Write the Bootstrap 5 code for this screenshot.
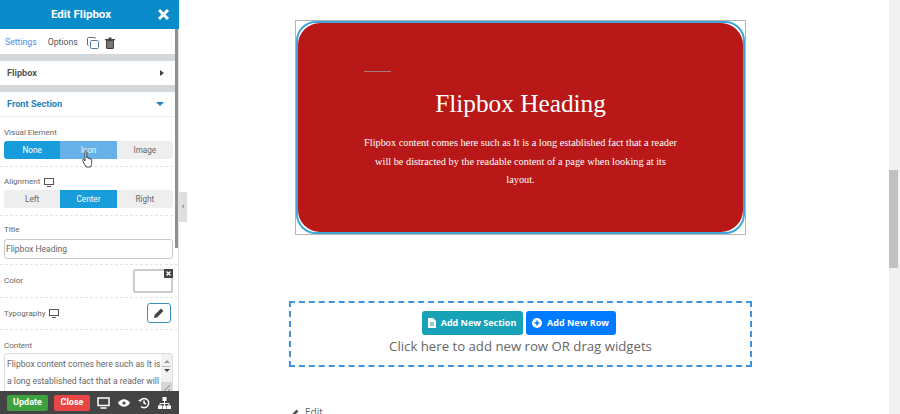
<!DOCTYPE html>
<html lang="en">

<head>
    <meta charset="UTF-8">
    <meta name="viewport" content="width=device-width, initial-scale=1.0">
    <title>Edit Flipbox</title>
    <link href="https://cdn.jsdelivr.net/npm/bootstrap@5.3.3/dist/css/bootstrap.min.css" rel="stylesheet">
    <style>
        html, body { height: 414px; overflow: hidden; }
        body { font-family: Roboto, "Liberation Sans", sans-serif; background: #fff; color: #555; }

        .page-wrap { height: 414px; }

        /* editor panel */
        .edit-panel { width: 179px; flex: none; height: 414px; background: #fff; }
        .panel-head { height: 29px; flex: none; background: #0a8cca; color: #fff; font-size: 11.5px; font-weight: 700; padding-right: 17px; }
        .panel-head svg { position: absolute; right: 9px; top: 8px; }
        .panel-body { flex: 1 1 auto; min-height: 0; overflow: hidden; position: relative; border-right: 1px solid #e4e4e4; }
        .panel-scroll { position: absolute; right: 0; top: 0; width: 3px; height: 219px; background: #8f8f8f; }
        .panel-tabs { height: 25px; font-size: 8.7px; padding: 2px 0 0 5px; color: #555; }
        .panel-tabs .tab-on { color: #4d8fe8; margin-right: 11px; }
        .panel-tabs .tab-off { margin-right: 9px; }
        .tab-icons { gap: 6px; }
        .grey-band { height: 7px; background: #d5d8da; margin-right: 3px; }
        .acc-row { height: 24px; font-size: 9.2px; font-weight: 700; padding: 0 11px 0 7px; margin-right: 3px; color: #555; }
        .acc-row.is-open { color: #1e84bd; border-bottom: 1px solid #eee; height: 25px; }
        .tri-right { width: 0; height: 0; border-left: 4px solid #444; border-top: 3px solid transparent; border-bottom: 3px solid transparent; }
        .tri-down { width: 0; height: 0; border-top: 4px solid #1e84bd; border-left: 4px solid transparent; border-right: 4px solid transparent; }

        .field-block { padding: 0 5px 0 4px; border-bottom: 1px dashed #e6e6e6; font-size: 8px; color: #666; }
        .field-label { font-size: 8px; line-height: 10px; color: #666; }
        .seg-group { height: 18px; background: #eee; border-radius: 3px; overflow: hidden; font-size: 8.2px; color: #666; }
        .seg-group > div { flex: 1 1 0; }
        .seg-on { background: #189cdc; color: #fff; }
        .seg-hover { color: #e8f2fa; background: #66b2e8; }
        .hand-cursor { position: absolute; left: 82px; top: 122px; }
        .field-input { height: 20px; border: 1px solid #c9c9c9; border-radius: 3px; font-size: 8.5px; color: #666; padding-left: 1px; }
        .color-swatch { width: 40px; height: 24px; border: 2px solid #ccc; border-radius: 2px; position: relative; background: #fff; }
        .swatch-x { position: absolute; right: -2px; top: -2px; width: 9px; height: 9px; background: #444; color: #fff; }
        .type-label { margin-top: 1px; }
        .type-btn { width: 24px; height: 20px; border: 1px solid #3b93bd; border-radius: 3px; }
        .fake-area { height: 50px; border: 1px solid #ddd; border-radius: 3px; font-size: 8.6px; line-height: 17px; color: #666; padding: 2px 10px 0 2px; position: relative; }
        .area-scroll { position: absolute; right: 0; top: 0; width: 11px; height: 100%; background: #f1f1f1; padding-top: 6px; }
        .scroll-line { width: 9px; height: 1px; background: #bbb; margin: 3px 0 2px; }
        .area-grip { position: absolute; right: 0; top: 28px; width: 11px; height: 10px; background: #d6d6d6; }

        .panel-foot { height: 23px; background: #444; padding-left: 7px; flex: none; }
        .foot-btn { height: 16px; border-radius: 2px; color: #fff; font-size: 9px; font-weight: 700; }
        .btn-upd { width: 41px; background: #3da13f; }
        .btn-cls { width: 36px; background: #e84545; margin-left: 6px; margin-right: 7px; }
        .foot-icons { gap: 8px; }

        .panel-handle { width: 8px; height: 30px; background: #dfdfdf; flex: none; margin-top: 192px; color: #555; font-size: 9px; }

        /* page area */
        .page-area { flex: 1 1 auto; min-width: 0; padding: 20px 0 0 102px; overflow: hidden; }
        .flip-outer { width: 451px; height: 215px; margin-left: 6px; border: 1px solid #b5b5b5; }
        .flip-inner { height: 100%; background: #fff; border: 2px solid #3ea6d8; border-radius: 20px; }
        .flip-face { height: 100%; background: #b91818; border-radius: 22px; overflow: hidden; color: #fff; font-family: "Liberation Serif", serif; text-align: center; }
        .flip-rule { width: 27px; height: 1px; background: #a87a7c; margin: 48px 0 0 66px; }
        .flip-title { font-size: 25.3px; line-height: 32px; margin: 15px 0 0; color: #fff; font-weight: 400; }
        .flip-text { font-size: 10.3px; line-height: 18.7px; margin: 15px auto 0; width: 316px; font-weight: 400; }
        .drop-box { width: 463px; height: 66px; margin-top: 66px; border: 2px dashed #4193e2; font-family: "Open Sans", sans-serif; padding-top: 8px; }
        .drop-btn { height: 24px; border-radius: 3px; color: #fff; font-size: 9px; font-weight: 700; gap: 5px; white-space: nowrap; }
        .drop-btn.one { width: 101px; background: #17a2b8; }
        .drop-btn.two { width: 90px; background: #007bff; }
        .drop-gap { gap: 3px; padding-right: 4px; }
        .drop-text { font-size: 13.2px; line-height: 20px; color: #666; margin-top: 1px; }
        .edit-link { font-family: "Open Sans", sans-serif; font-size: 10px; color: #666; margin-top: 38px; gap: 6px; padding-left: 2px; }

        .page-bar { width: 11px; flex: none; background: #f1f1f1; padding-top: 170px; }
        .page-thumb { height: 98px; margin-right: 2px; background: #c1c1c1; }
    </style>
</head>

<body>
    <div class="page-wrap d-flex">
        <div class="edit-panel d-flex flex-column">
            <div class="panel-head position-relative d-flex align-items-center justify-content-center">
                Edit Flipbox
                <svg width="13" height="13" viewBox="0 0 13 13"><path d="M2 2l9 9M11 2l-9 9" stroke="#fff" stroke-width="3"/></svg>
            </div>
            <div class="panel-body">
                <div class="panel-scroll"></div>
                <div class="panel-tabs d-flex align-items-center">
                    <span class="tab-on">Settings</span>
                    <span class="tab-off">Options</span>
                    <span class="tab-icons d-flex align-items-center">
                        <svg width="12" height="12" viewBox="0 0 12 12" fill="none" stroke="#667"><path d="M8.500 1.500a1 1 0 0 0-1-1h-6a1 1 0 0 0-1 1v6a1 1 0 0 0 1 1"/><rect x="3.500" y="3.500" width="8" height="8" rx="1" stroke="#567a9a"/></svg>
                        <svg width="10" height="12" viewBox="0 0 10 12"><path d="M0 2h10v1.200H0zM3.500 .5h3V2h-3z" fill="#444"/><path d="M1.500 3.500h7V11a.5.5 0 0 1-.5.500H2a.5.5 0 0 1-.5-.5z" fill="#777" stroke="#4a3a3a"/></svg>
                    </span>
                </div>
                <div class="grey-band"></div>
                <div class="acc-row d-flex align-items-center justify-content-between"><span>Flipbox</span><span class="tri-right"></span></div>
                <div class="grey-band"></div>
                <div class="acc-row is-open d-flex align-items-center justify-content-between"><span>Front Section</span><span class="tri-down"></span></div>

                <div class="field-block" style="padding-top: 11px; padding-bottom: 7px;">
                    <div class="field-label" style="margin-bottom: 3px;">Visual Element</div>
                    <div class="seg-group d-flex text-center">
                        <div class="seg-on d-flex align-items-center justify-content-center">None</div>
                        <div class="seg-hover d-flex align-items-center justify-content-center">Icon</div>
                        <div class="d-flex align-items-center justify-content-center">Image</div>
                    </div>
                </div>
                <svg class="hand-cursor" width="12" height="17" viewBox="0 0 12 17"><path d="M3 1.500c0-1 1.800-1 1.800 0V7c0-.8 1.700-.8 1.700 0v.7c0-.8 1.600-.8 1.600 0v.6c0-.8 1.600-.6 1.600.3v3.900c0 1-.6 1.500-.9 3.500H4c-.4-1.500-1.200-2.300-2.300-4L.7 9.500c-.4-.9.700-1.600 1.400-.8L3 10z" fill="#fff" stroke="#222" stroke-width=".8"/></svg>
                <div class="field-block" style="padding-top: 10px; padding-bottom: 7px;">
                    <div class="field-label d-flex align-items-center gap-1" style="margin-bottom: 3px;">Alignment
                        <svg width="10" height="9" viewBox="0 0 10 9" fill="none" stroke="#555"><rect x=".5" y=".5" width="9" height="6"/><path d="M3 8.500h4"/></svg>
                    </div>
                    <div class="seg-group d-flex text-center">
                        <div class="d-flex align-items-center justify-content-center">Left</div>
                        <div class="seg-on d-flex align-items-center justify-content-center">Center</div>
                        <div class="d-flex align-items-center justify-content-center">Right</div>
                    </div>
                </div>
                <div class="field-block" style="padding-top: 9px; padding-bottom: 5px;">
                    <div class="field-label mb-1">Title</div>
                    <div class="field-input d-flex align-items-center">Flipbox Heading</div>
                </div>
                <div class="field-block d-flex align-items-center justify-content-between" style="padding-top: 4px; padding-bottom: 4px;">
                    <span>Color</span>
                    <div class="color-swatch"><span class="swatch-x d-flex align-items-center justify-content-center"><svg width="7" height="7" viewBox="0 0 7 7"><path d="M1.500 1.500l4 4M5.500 1.500l-4 4" stroke="#fff" stroke-width="1.400"/></svg></span></div>
                </div>
                <div class="field-block d-flex align-items-center justify-content-between" style="padding-top: 5px; padding-bottom: 6px; padding-right: 7px;">
                    <span class="type-label d-flex align-items-center gap-1">Typography
                        <svg width="10" height="9" viewBox="0 0 10 9" fill="none" stroke="#555"><rect x=".5" y=".5" width="9" height="6"/><path d="M3 8.500h4"/></svg>
                    </span>
                    <div class="type-btn d-flex align-items-center justify-content-center">
                        <svg width="10" height="10" viewBox="0 0 10 10"><path d="M0 10l.6-3L7 .6 9.400 3 3 9.400z" fill="#444"/></svg>
                    </div>
                </div>
                <div class="field-block border-0" style="padding-top: 11px;">
                    <div class="field-label" style="margin-bottom: 2px;">Content</div>
                    <div class="fake-area">Flipbox content comes here such as It is a long established fact that a reader will
                        <div class="area-scroll d-flex flex-column align-items-center">
                            <span class="tri-down" style="transform: rotate(180deg); border-top-color: #999; border-width: 3px 3px 0;"></span>
                            <span class="scroll-line"></span>
                            <span class="tri-down" style="border-top-color: #444; border-width: 3px 3px 0;"></span>
                            <span class="area-grip"><svg class="d-block" width="11" height="10" viewBox="0 0 11 10" fill="none" stroke="#888"><path d="M3 9l6-6M7 9l2-2"/></svg></span>
                        </div>
                    </div>
                </div>
            </div>
            <div class="panel-foot d-flex align-items-center">
                <div class="foot-btn btn-upd d-flex align-items-center justify-content-center">Update</div>
                <div class="foot-btn btn-cls d-flex align-items-center justify-content-center">Close</div>
                <div class="foot-icons d-flex align-items-center">
                    <svg width="13" height="12" viewBox="0 0 13 12" fill="none" stroke="#fff" stroke-width="1.500"><rect x="1" y="1" width="11" height="7.500"/><path d="M3.500 11h6"/></svg>
                    <svg width="12" height="8" viewBox="0 0 12 8"><path d="M0 4c3-5 9-5 12 0-3 5-9 5-12 0z" fill="#fff"/><circle cx="6" cy="4" r="1.600" fill="#444"/></svg>
                    <svg width="12" height="12" viewBox="0 0 12 12" fill="none" stroke="#fff" stroke-width="1.500"><path d="M2 4a4.600 4.600 0 1 1 1 5.500M6 3.500V6l2 1"/><path d="M0 3.500l3 1.500 .5-3z" fill="#fff" stroke="none"/></svg>
                    <svg width="13" height="12" viewBox="0 0 13 12" fill="none" stroke="#fff"><rect x="5" y=".5" width="3" height="3" fill="#fff"/><path d="M6.500 3.500v3M2 9V6.500h9V9M6.500 6.500V9"/><rect x=".5" y="9" width="3" height="2.500" fill="#fff"/><rect x="5" y="9" width="3" height="2.500" fill="#fff"/><rect x="9.500" y="9" width="3" height="2.500" fill="#fff"/></svg>
                </div>
            </div>
        </div>
        <div class="panel-handle d-flex align-items-center justify-content-center">&#8249;</div>

        <div class="page-area">
            <div class="flip-outer">
                <div class="flip-inner">
                    <div class="flip-face">
                        <div class="flip-rule"></div>
                        <h2 class="flip-title">Flipbox Heading</h2>
                        <p class="flip-text">Flipbox content comes here such as It is a long established fact that a reader will be distracted by the readable content of a page when looking at its layout.</p>
                    </div>
                </div>
            </div>
            <div class="drop-box text-center">
                <div class="d-flex justify-content-center drop-gap">
                    <div class="drop-btn one d-flex align-items-center justify-content-center">
                        <svg width="8" height="10" viewBox="0 0 8 10"><path d="M0 0h5l3 3v7H0z" fill="#fff"/><path d="M2 5h4M2 7h4" stroke="#17a2b8"/></svg>
                        Add New Section
                    </div>
                    <div class="drop-btn two d-flex align-items-center justify-content-center">
                        <svg width="10" height="10" viewBox="0 0 10 10"><circle cx="5" cy="5" r="5" fill="#fff"/><path d="M5 2.500v5M2.500 5h5" stroke="#007bff" stroke-width="1.500"/></svg>
                        Add New Row
                    </div>
                </div>
                <div class="drop-text">Click here to add new row OR drag widgets</div>
            </div>
            <div class="edit-link d-flex align-items-center">
                <svg width="8" height="8" viewBox="0 0 10 10"><path d="M0 10l.6-3L7 .6 9.400 3 3 9.400z" fill="#555"/></svg>
                Edit
            </div>
        </div>
        <div class="page-bar"><div class="page-thumb"></div></div>
    </div>

    <script src="https://cdn.jsdelivr.net/npm/bootstrap@5.3.3/dist/js/bootstrap.bundle.min.js"></script>
</body>

</html>
